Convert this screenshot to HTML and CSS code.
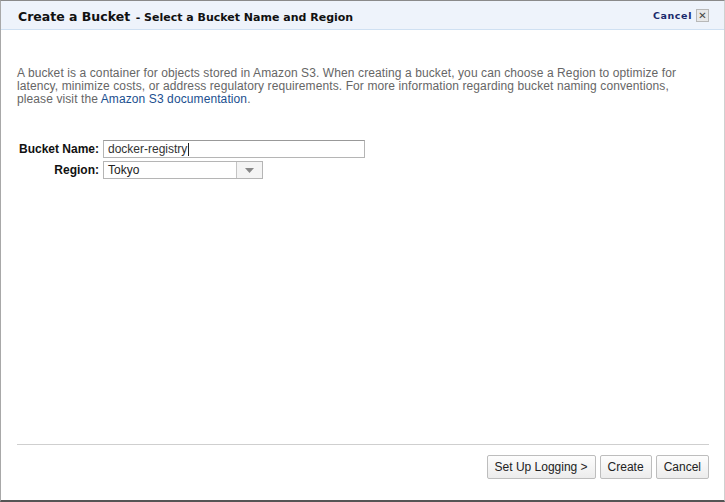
FILE: index.html
```html
<!DOCTYPE html>
<html>
<head>
<meta charset="utf-8">
<link rel="stylesheet" href="styles.css">
</head>
<body>
<div class="dialog">
  <div class="header">
    <div class="title"><span class="main">Create a Bucket</span> <span class="sub">- Select a Bucket Name and Region</span></div>
    <div class="close"><a class="cancel-link">Cancel</a><span class="xbox">&#x2715;</span></div>
  </div>
  <div class="content">
    <p class="desc">A bucket is a container for objects stored in Amazon S3. When creating a bucket, you can choose a Region to optimize for latency, minimize costs, or address regulatory requirements. For more information regarding bucket naming conventions, please visit the <a class="link">Amazon S3 documentation</a>.</p>
    <div class="form">
      <label class="lbl">Bucket Name:</label>
      <div class="input"><span>docker-registry</span><span class="caret"></span></div>
      <label class="lbl">Region:</label>
      <div class="select"><span class="val">Tokyo</span><span class="arrow"><svg width="9" height="5" viewBox="0 0 9 5"><path d="M0 0H9L4.5 5Z" fill="#888"/></svg></span></div>
    </div>
  </div>
  <div class="footer">
    <button class="btn">Set Up Logging &gt;</button>
    <button class="btn">Create</button>
    <button class="btn">Cancel</button>
  </div>
</div>
</body>
</html>
```
FILE: styles.css
```css
html, body { margin: 0; padding: 0; }
body { width: 725px; height: 502px; overflow: hidden; background: #fff; font-family: "Liberation Sans", Arial, sans-serif; }
.dialog {
  box-sizing: border-box;
  width: 725px; height: 502px;
  border-top: 1px solid #8a8a8a;
  border-left: 1px solid #a8a8a8;
  border-right: 1px solid #d0d0d0;
  border-bottom: 2px solid #555;
  display: flex; flex-direction: column;
  background: #fff;
}
.header {
  height: 28px;
  background: #eef3fb;
  border-bottom: 1px solid #cfe0f2;
  display: flex; align-items: center; justify-content: space-between;
  padding: 0 15px 0 17px;
}
.title { font-family: "DejaVu Sans", Verdana, sans-serif; font-weight: bold; color: #111; }
.title .main { font-size: 12.5px; }
.title .sub { font-size: 11px; }
.close { display: flex; align-items: center; gap: 4px; }
.cancel-link { font-family: "DejaVu Sans", Verdana, sans-serif; font-size: 9.5px; color: #1a2a6c; letter-spacing: 0.6px; font-weight: 600; }
.xbox {
  width: 13px; height: 13px; box-sizing: border-box;
  border: 1px solid #b8b8b8; background: #e8e8e8;
  font-size: 10px; line-height: 11px; text-align: center; color: #444;
  font-family: "DejaVu Sans", sans-serif;
}
.content { flex: 1; padding: 0 16px; }
.desc { margin: 37px 0 0 0; max-width: 680px; font-size: 12px; line-height: 13px; color: #666; letter-spacing: 0.1px; }
.link { color: #1b4f8f; }
.form {
  margin-top: 34px;
  display: grid;
  grid-template-columns: 82px auto;
  column-gap: 4px; row-gap: 3px;
  align-items: center;
}
.lbl { font-size: 12px; font-weight: bold; color: #111; text-align: right; line-height: 17px; }
.input {
  width: 262px; height: 18px; box-sizing: border-box;
  border: 1px solid #b5b5b5; border-top-color: #999;
  font-size: 12px; color: #333; padding-left: 4px; line-height: 16px;
  display: flex; align-items: center;
}
.caret { display: inline-block; width: 1px; height: 13px; background: #222; margin-left: 1px; }
.select {
  width: 160px; height: 18px; box-sizing: border-box;
  border: 1px solid #b5b5b5;
  display: flex; font-size: 12px; color: #222;
}
.select .val { flex: 1; padding-left: 4px; line-height: 16px; }
.select .arrow {
  width: 25px; border-left: 1px solid #c4c4c4; background: #f4f4f4;
  display: flex; align-items: center; justify-content: center;
}
.footer {
  margin: 0 15px 0 16px;
  border-top: 1px solid #cfcfcf;
  height: 56px;
  display: flex; justify-content: flex-end; align-items: flex-start;
  gap: 4px; padding-top: 10px; box-sizing: border-box;
}
.btn {
  height: 24px; padding: 0 7px;
  font-family: "Liberation Sans", Arial, sans-serif; font-size: 12px; color: #222;
  border: 1px solid #bdbdbd; border-radius: 2px;
  background: linear-gradient(#fdfdfd, #ececec);
  margin: 0;
}
```
